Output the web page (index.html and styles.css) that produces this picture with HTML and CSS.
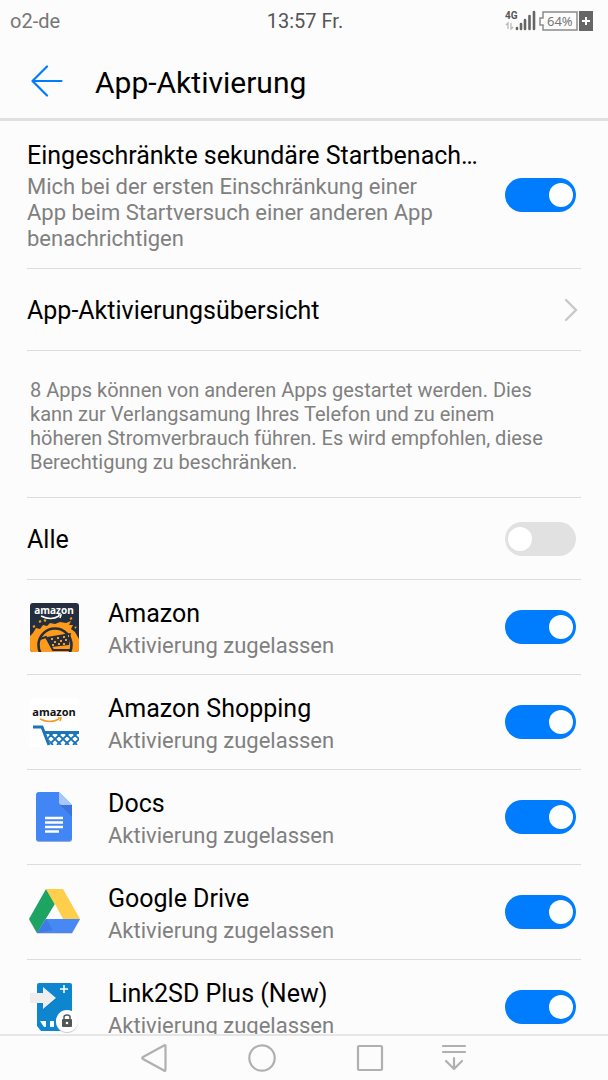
FILE: index.html
```html
<!DOCTYPE html>
<html lang="de">

<head>
  <meta charset="UTF-8">
  <meta name="viewport" content="width=device-width, initial-scale=1.0">
  <title>App-Aktivierung</title>
  <link rel="stylesheet" href="styles.css">
</head>

<body>
  <div class="status">
    <span class="carrier">o2-de</span>
    <span class="clock">13:57 Fr.</span>
    <div class="indicators">
      <svg width="32" height="22" viewBox="0 0 32 22">
        <text class="net" x="0" y="9">4G</text>
        <path d="M3 19v-6l-2 2M6 13v6l2-2" fill="none" stroke="#b5b5b5" stroke-width="1.2" />
        <path d="M12 18v1M16 14v5M20 10v9M24.500 6v13M29 2v17" stroke="#666" stroke-width="2.600" stroke-linecap="round" />
      </svg>
      <svg width="56" height="20" viewBox="0 0 56 20">
        <path d="M5 1h34v18H5v-5H2V7h3z" fill="none" stroke="#8a8a8a" stroke-width="1.500" />
        <text class="percent" x="9" y="15">64%</text>
        <path d="M41 0h14v20H41z" fill="#666" />
        <path d="M44 10h8M48 6v8" stroke="#fff" stroke-width="2" />
      </svg>
    </div>
  </div>

  <header class="header">
    <button class="back" aria-label="Zurück">
      <svg width="32" height="32" viewBox="0 0 32 32">
        <path d="M30.500 16H2M16 1.500L1.500 16 16 30.500" />
      </svg>
    </button>
    <h1>App-Aktivierung</h1>
  </header>

  <main class="list">
    <div class="row notify">
      <label class="text" for="notify">
        <span class="name">Eingeschränkte sekundäre Startbenachrichtigung</span>
        <span class="desc">Mich bei der ersten Einschränkung einer App beim Startversuch einer anderen App benachrichtigen</span>
      </label>
      <input class="switch" type="checkbox" id="notify" checked>
    </div>

    <a class="row overview" href="#">
      <span class="name">App-Aktivierungsübersicht</span>
      <svg class="chevron" width="14" height="24" viewBox="0 0 14 24">
        <path d="M2 2l10 10L2 22" />
      </svg>
    </a>

    <p class="note">8 Apps können von anderen Apps gestartet werden. Dies kann zur Verlangsamung Ihres Telefon und zu einem höheren Stromverbrauch führen. Es wird empfohlen, diese Berechtigung zu beschränken.</p>

    <div class="row all">
      <label class="name" for="all">Alle</label>
      <input class="switch" type="checkbox" id="all">
    </div>

    <div class="row app">
      <svg class="icon" width="54" height="54" viewBox="0 0 54 54">
        <defs>
          <clipPath id="tile"><rect x="3" y="3" width="49" height="49" rx="3" /></clipPath>
        </defs>
        <g clip-path="url(#tile)">
          <path d="M3 3h49v49H3z" fill="#232f3e" />
          <path d="M3 36l3-3 3-5 4 1 3-4 4 1 3-3 5 1 5-2 6 1 5-2-2 4 4 0-2 4 4 3 4 7v14H3z" fill="#ff9a1b" />
          <path d="M6 27l2-1M12 22l2-1M43 19l2-1M48 27l1 1M17 20l2 1" stroke="#ff9a1b" stroke-width="2" />
          <circle cx="28" cy="45" r="16.500" fill="none" stroke="#232f3e" stroke-width="2.600" />
          <path d="M13 39l6-2 7 13h18" fill="none" stroke="#232f3e" stroke-width="2" />
          <path d="M20 37l24-4-2 12-18 2z" fill="#232f3e" />
          <path d="M24 39h2M30 38h2M36 37h2M41 36h1M27 42h2M33 41h2M38 40h2M25 45h2M31 44h2M36 44h2" stroke="#ff9a1b" stroke-width="2" />
        </g>
        <text class="brand light" x="27" y="14">amazon</text>
        <path d="M14 16q10 5 18 0M31 15h3l-1 3" fill="none" stroke="#fff" stroke-width="1.500" />
      </svg>
      <label class="text" for="amazon">
        <span class="name">Amazon</span>
        <span class="desc">Aktivierung zugelassen</span>
      </label>
      <input class="switch" type="checkbox" id="amazon" checked>
    </div>

    <div class="row app">
      <svg class="icon" width="54" height="54" viewBox="0 0 54 54">
        <defs>
          <clipPath id="basket"><path d="M18 38h34v12H24z" /></clipPath>
        </defs>
        <rect x="3" y="3" width="49" height="49" rx="3" fill="#fff" />
        <text class="brand dark" x="27" y="21">amazon</text>
        <path d="M13 24q10 5 19 0M31 23h3l-1 3" fill="none" stroke="#f79a1c" stroke-width="1.500" />
        <path d="M6 32h9l7 18" fill="none" stroke="#1b75b8" stroke-width="3" />
        <path d="M17 36h35v3H18z" fill="#1b75b8" />
        <path clip-path="url(#basket)" d="M14 38l12 12M22 38l12 12M30 38l12 12M38 38l12 12M46 38l12 12M26 38L14 50M34 38L22 50M42 38L30 50M50 38L38 50M58 38L46 50" fill="none" stroke="#1b75b8" stroke-width="1.800" />
      </svg>
      <label class="text" for="shopping">
        <span class="name">Amazon Shopping</span>
        <span class="desc">Aktivierung zugelassen</span>
      </label>
      <input class="switch" type="checkbox" id="shopping" checked>
    </div>

    <div class="row app">
      <svg class="icon" width="54" height="54" viewBox="0 0 54 54">
        <path d="M12 3h20l13 13v33q0 3-3 3H12q-3 0-3-3V6q0-3 3-3z" fill="#2a56c6" opacity=".5" />
        <path d="M12 2h20l13 13v33q0 3-3 3H12q-3 0-3-3V5q0-3 3-3z" fill="#4285f4" />
        <path d="M33 15h12v12z" fill="#3a74dc" />
        <path d="M32 2l13 13H35q-3 0-3-3z" fill="#a8c7fa" />
        <path d="M18 28h18M18 32.500h18M18 37h18M18 41.500h14" stroke="#fff" stroke-width="2.600" />
      </svg>
      <label class="text" for="docs">
        <span class="name">Docs</span>
        <span class="desc">Aktivierung zugelassen</span>
      </label>
      <input class="switch" type="checkbox" id="docs" checked>
    </div>

    <div class="row app">
      <svg class="icon" width="54" height="54" viewBox="0 0 54 54">
        <path d="M19 5h17l17 30-8 14H10L2 35z" fill="#999" opacity=".35" />
        <path d="M19 4l9 15-18 29-8-14z" fill="#1da462" />
        <path d="M19 4h17l17 30H36z" fill="#ffcf4b" />
        <path d="M19 34h34l-8 14H10z" fill="#4688f4" />
        <path d="M19 34l7 11-16 3z" fill="#3f7be6" />
        <path d="M28 19l8 15H19z" fill="#fcfcfc" />
      </svg>
      <label class="text" for="drive">
        <span class="name">Google Drive</span>
        <span class="desc">Aktivierung zugelassen</span>
      </label>
      <input class="switch" type="checkbox" id="drive" checked>
    </div>

    <div class="row app">
      <svg class="icon" width="54" height="54" viewBox="0 0 54 54">
        <path d="M12 3h31q2 0 2 2v44q0 2-2 2H14l-4-5V5q0-2 2-2z" fill="#0e86cf" />
        <path d="M13 41h6v6h-2zM23 41h4v6h-4z" fill="#fff" />
        <path d="M3 14h13V8l14 11-14 11v-7H3z" fill="#0b6aa6" opacity=".4" />
        <path d="M3 13h13V7l13 11-13 11v-6H3z" fill="#eee" />
        <path d="M33 9h8M37 5v8" stroke="#fff" stroke-width="1.500" />
        <circle cx="40" cy="42" r="11" fill="#ccc" />
        <circle cx="40" cy="41" r="11" fill="#fff" />
        <path d="M36 39h8q1 0 1 1v6q0 1-1 1h-8q-1 0-1-1v-6q0-1 1-1z" fill="#555" />
        <path d="M37 39v-2q0-2 3-2t3 2v2" fill="none" stroke="#555" stroke-width="1.500" />
        <circle cx="40" cy="43" r="1.300" fill="#fff" />
      </svg>
      <label class="text" for="link2sd">
        <span class="name">Link2SD Plus (New)</span>
        <span class="desc">Aktivierung zugelassen</span>
      </label>
      <input class="switch" type="checkbox" id="link2sd" checked>
    </div>
  </main>

  <nav class="nav">
    <button aria-label="Zurück">
      <svg width="28" height="30" viewBox="0 0 28 30">
        <path d="M24 2.500q1.500-1 1.500 1v23q0 2-1.500 1L3 16q-1.500-1 0-2z" />
      </svg>
    </button>
    <button aria-label="Startseite">
      <svg width="28" height="30" viewBox="0 0 28 30">
        <circle cx="14" cy="15" r="12.700" />
      </svg>
    </button>
    <button aria-label="Letzte Apps">
      <svg width="28" height="30" viewBox="0 0 28 30">
        <rect x="2" y="3" width="24" height="24" rx="1" />
      </svg>
    </button>
    <button aria-label="Benachrichtigungen">
      <svg width="28" height="30" viewBox="0 0 28 30">
        <path d="M3 3h22M3 9h22M14 15v11M6 18l8 8 8-8" />
      </svg>
    </button>
  </nav>
</body>

</html>
```
FILE: styles.css
```css
* {
  margin: 0;
  box-sizing: border-box;
}

body {
  display: flex;
  flex-direction: column;
  height: 100vh;
  font-family: Roboto, "Liberation Sans", sans-serif;
  background: #fcfcfc;
  color: #000;
}

button {
  display: flex;
  padding: 0;
  border: none;
  background: none;
  cursor: pointer;
}

.status {
  display: grid;
  grid-template-columns: 1fr auto 1fr;
  align-items: center;
  flex: none;
  height: 42px;
  padding: 0 14px 0 10px;
  font-size: 20px;
  color: #555;
}

.carrier {
  color: #777;
}

.clock {
  padding-left: 6px;
}

.indicators {
  display: flex;
  align-items: center;
  justify-content: flex-end;
  gap: 1px;
}

.net {
  font-size: 10px;
  font-weight: bold;
  fill: #555;
}

.percent {
  font-family: "Noto Sans", sans-serif;
  font-size: 13px;
  fill: #777;
}

.header {
  display: flex;
  align-items: center;
  flex: none;
  gap: 32px;
  height: 79px;
  padding: 2px 31px 0;
  border-bottom: 3px solid #e0e0e0;
}

.header h1 {
  font-size: 30px;
  font-weight: normal;
  line-height: 36px;
  padding-top: 4px;
}

.back path {
  fill: none;
  stroke: #007dff;
  stroke-width: 2.2;
  stroke-linecap: round;
  stroke-linejoin: round;
}

.list {
  flex: 1;
  min-height: 0;
  overflow: hidden;
  padding: 0 27px;
}

.row {
  display: flex;
  align-items: center;
  justify-content: space-between;
  padding-right: 5px;
  border-bottom: 1px solid #dcdcdc;
  color: #000;
  text-decoration: none;
}

.text {
  flex: 1;
  min-width: 0;
}

.name {
  display: block;
  overflow: hidden;
  font-size: 25px;
  line-height: 32px;
  padding-top: 2px;
  white-space: nowrap;
  text-overflow: ellipsis;
}

.desc {
  display: block;
  font-size: 22px;
  line-height: 26px;
  color: #808080;
}

.notify {
  height: 148px;
  gap: 20px;
}

.notify .desc {
  padding: 2px 40px 0 0;
}

.overview,
.all {
  height: 82px;
}

.chevron {
  margin-right: -2px;
}

.chevron path {
  fill: none;
  stroke: #c8c8c8;
  stroke-width: 2.4;
  stroke-linecap: round;
}

.note {
  padding: 27px 20px 23px 3px;
  border-bottom: 1px solid #dcdcdc;
  font-size: 20px;
  line-height: 24px;
  color: #808080;
}

.app {
  height: 95px;
}

.app .text {
  margin-left: 27px;
  padding-top: 4px;
}

.app .desc {
  line-height: 32px;
}

.icon {
  flex: none;
}

.brand {
  font-family: "Open Sans", sans-serif;
  font-size: 11px;
  font-weight: bold;
  text-anchor: middle;
}

.dark {
  fill: #111;
}

.light {
  font-size: 10px;
  fill: #fff;
}

.switch {
  appearance: none;
  display: flex;
  align-items: center;
  flex: none;
  width: 71px;
  height: 34px;
  padding: 0 3px;
  border-radius: 17px;
  background: #e1e1e1;
  cursor: pointer;
}

.switch::before {
  content: "";
  width: 24px;
  height: 24px;
  border-radius: 50%;
  background: #fff;
}

.switch:checked {
  justify-content: flex-end;
  background: #007dff;
}

.nav {
  display: flex;
  align-items: center;
  justify-content: center;
  flex: none;
  gap: 80px;
  height: 46px;
  border-top: 2px solid #e6e6e6;
}

.nav button:last-child {
  margin-left: -24px;
}

.nav svg {
  fill: none;
  stroke: #b0b0b0;
  stroke-width: 2.2;
  stroke-linecap: round;
  stroke-linejoin: round;
}
```
